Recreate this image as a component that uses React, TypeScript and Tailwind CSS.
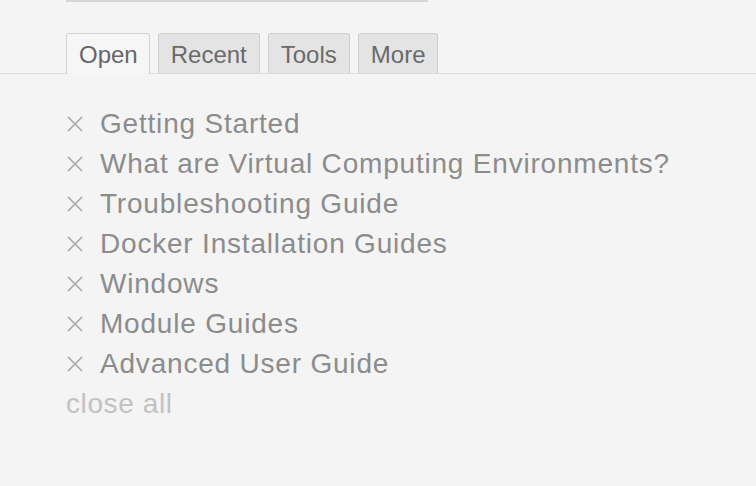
import React from "react";

const items = [
  "Getting Started",
  "What are Virtual Computing Environments?",
  "Troubleshooting Guide",
  "Docker Installation Guides",
  "Windows",
  "Module Guides",
  "Advanced User Guide",
];

const tabs = ["Open", "Recent", "Tools", "More"];

function CloseIcon() {
  return (
    <svg width="18" height="18" viewBox="0 0 18 18" className="shrink-0">
      <path d="M2 2 L16 16 M16 2 L2 16" stroke="#a8a8a8" strokeWidth="1.6" fill="none" />
    </svg>
  );
}

export default function App() {
  return (
    <div
      className="w-[756px] h-[486px] bg-[#f4f4f4] overflow-hidden"
      style={{ fontFamily: '"Liberation Sans", Arial, sans-serif' }}
    >
      <div className="ml-[66px] w-[362px] h-[2px] bg-[#d6d6d6]" />

      {/* Tabs */}
      <div className="mt-[31px] flex items-end pl-[66px] border-b border-[#dcdcdc]">
        {tabs.map((t, i) => (
          <div
            key={t}
            className={
              i === 0
                ? "h-[41px] pl-[12px] pr-[11px] pt-[2px] flex items-center bg-[#f6f6f6] border border-b-0 border-[#d4d4d4] rounded-t-[3px] text-[24px] text-[#666] -mb-px relative"
                : "ml-[8px] h-[40px] px-[12px] pt-[2px] flex items-center bg-[#e4e4e4] border border-b-0 border-[#cfcfcf] rounded-t-[3px] text-[24px] text-[#6a6a6a]"
            }
          >
            {t}
          </div>
        ))}
      </div>

      {/* List */}
      <div className="pl-[66px] mt-[30px] flex flex-col">
        {items.map((it) => (
          <div key={it} className="h-[40px] flex items-center gap-[16px]">
            <CloseIcon />
            <span className="text-[28px] text-[#8c8c8c] tracking-[0.8px] leading-none">{it}</span>
          </div>
        ))}
        <div className="h-[40px] flex items-center text-[28px] text-[#c2c2c2] tracking-[0.6px] leading-none">
          close all
        </div>
      </div>
    </div>
  );
}
